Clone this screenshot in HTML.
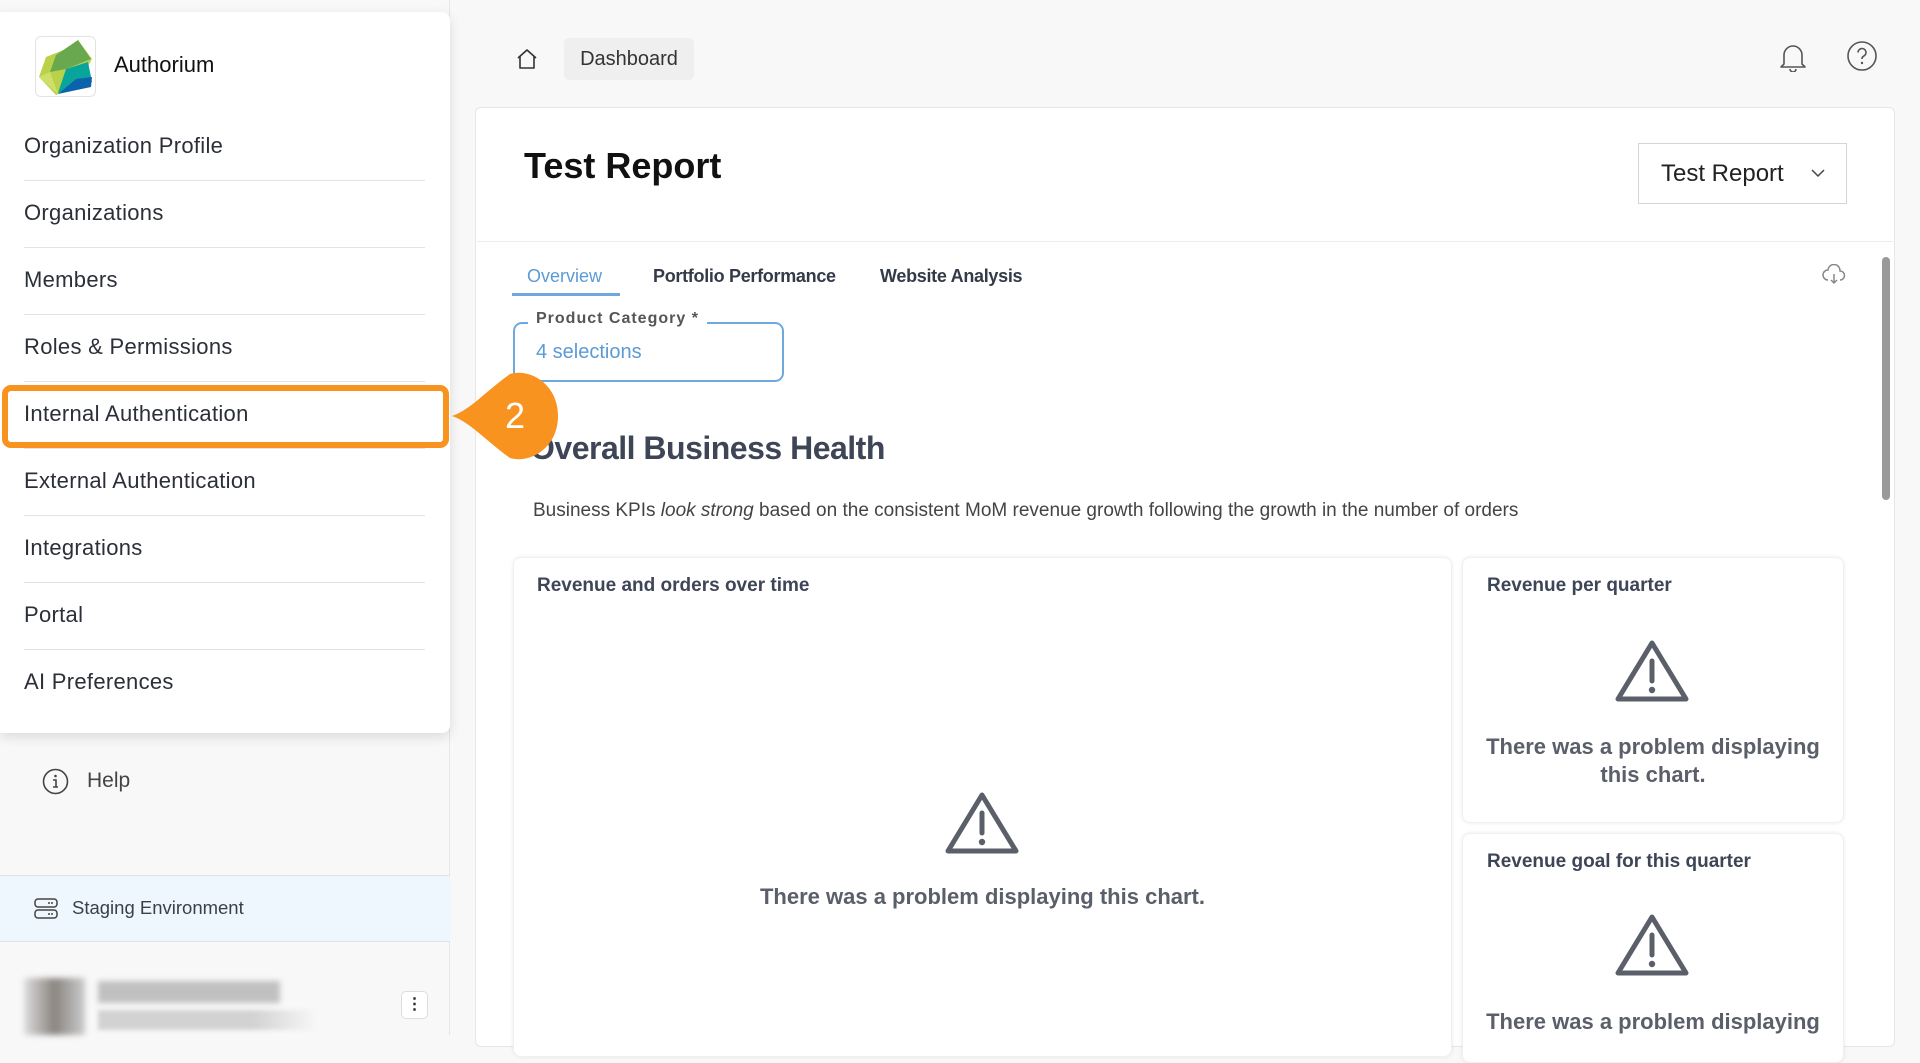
<!DOCTYPE html>
<html><head><meta charset="utf-8"><style>
*{box-sizing:border-box;margin:0;padding:0}
body{width:1920px;height:1035px;overflow:hidden;background:#f8f8f8;font-family:"Liberation Sans",sans-serif;position:relative;color:#222}
.abs{position:absolute}
.side{left:0;top:0;width:450px;height:1035px;background:#f8f8f8;border-right:1px solid #e6e6e6}
.card{left:0;top:12px;width:450px;height:721px;background:#fff;border-radius:0 8px 8px 0;box-shadow:0 4px 12px rgba(0,0,0,.12)}
.nav{position:absolute;left:24px;font-size:22px;letter-spacing:.3px;color:#2b2f38;transform:translateY(-50%)}
.div{position:absolute;left:24px;width:401px;height:1px;background:#e3e3e3}
.main{left:475px;top:107px;width:1420px;height:940px;background:#fff;border:1px solid #e6e6e6;border-radius:6px}
.chart{background:#fff;border-radius:8px;box-shadow:0 0 4px rgba(0,0,0,.08);border:1px solid #f0f0f0}
.ct{position:absolute;font-size:19px;font-weight:bold;color:#3d4557}
.err{position:absolute;font-size:22px;font-weight:bold;color:#5a5f6a;text-align:center}
</style></head><body>
<div class="abs side"></div>
<div class="abs card"></div>
<div class="abs" style="left:35px;top:36px;width:61px;height:61px;border:1px solid #e3e3e3;border-radius:6px;background:#fff;overflow:hidden">
<svg width="61" height="61" viewBox="0 0 61 61"><polygon points="3,40 10,20 30,12 42,3 56,22 40,50 20,58" fill="#b9d24a"/><polygon points="14,35 20,18 42,3 55,22 30,32" fill="#6aa84f"/><polygon points="22,56 30,32 52,25 56,45" fill="#0aa59a"/><polygon points="22,57 40,42 56,40 55,50" fill="#0d62ad"/><polygon points="3,40 14,35 22,57" fill="#cfe06a"/></svg></div>
<div class="abs" style="left:114px;top:52px;font-size:22px;color:#111">Authorium</div>
<div class="nav" style="top:146px">Organization Profile</div><div class="div" style="top:180px"></div>
<div class="nav" style="top:213px">Organizations</div><div class="div" style="top:247px"></div>
<div class="nav" style="top:280px">Members</div><div class="div" style="top:314px"></div>
<div class="nav" style="top:347px">Roles &amp; Permissions</div><div class="div" style="top:381px"></div>
<div class="nav" style="top:414px">Internal Authentication</div><div class="div" style="top:448px"></div>
<div class="nav" style="top:481px">External Authentication</div><div class="div" style="top:515px"></div>
<div class="nav" style="top:548px">Integrations</div><div class="div" style="top:582px"></div>
<div class="nav" style="top:615px">Portal</div><div class="div" style="top:649px"></div>
<div class="nav" style="top:682px">AI Preferences</div>
<div class="abs" style="left:2px;top:385px;width:447px;height:63px;border:6px solid #f7931e;border-radius:9px"></div>
<svg class="abs" style="left:42px;top:768px" width="27" height="27" viewBox="0 0 27 27"><circle cx="13.5" cy="13.5" r="12" fill="none" stroke="#444" stroke-width="1.6"/><circle cx="13.5" cy="8" r="1.3" fill="#444"/><path d="M11 12h3v7M11 19h5" stroke="#444" stroke-width="1.6" fill="none"/></svg>
<div class="abs" style="left:87px;top:769px;font-size:21px;color:#444">Help</div>
<div class="abs" style="left:0;top:875px;width:450px;height:67px;background:#eff7fe;border-top:1px solid #e3e3e3;border-bottom:1px solid #e3e3e3"></div>
<svg class="abs" style="left:34px;top:898px" width="24" height="22" viewBox="0 0 24 22"><rect x="1" y="1" width="22" height="8" rx="3" fill="none" stroke="#444" stroke-width="1.5"/><rect x="1" y="12" width="22" height="8" rx="3" fill="none" stroke="#444" stroke-width="1.5"/><circle cx="15" cy="5" r="1" fill="#444"/><circle cx="18" cy="5" r="1" fill="#444"/><circle cx="15" cy="16" r="1" fill="#444"/><circle cx="18" cy="16" r="1" fill="#444"/></svg>
<div class="abs" style="left:72px;top:897px;font-size:18.5px;color:#3a3f4a">Staging Environment</div>
<div class="abs" style="left:24px;top:978px;width:61px;height:57px;background:linear-gradient(90deg,#ddd,#8a8580,#ccc);filter:blur(3px)"></div>
<div class="abs" style="left:98px;top:981px;width:182px;height:22px;background:#c0c0c0;filter:blur(3px)"></div>
<div class="abs" style="left:98px;top:1010px;width:220px;height:20px;background:linear-gradient(90deg,#d2d2d2 70%,#f8f8f8);filter:blur(2px)"></div>
<div class="abs" style="left:401px;top:991px;width:27px;height:28px;border:1px solid #ddd;border-radius:5px;background:#fff;text-align:center;font-size:16px;line-height:26px;font-weight:bold">⋮</div>
<svg class="abs" style="left:516px;top:48px" width="22" height="22" viewBox="0 0 22 22"><path d="M2 10 L11 2 L20 10 M4 8 V20 H18 V8" fill="none" stroke="#333" stroke-width="1.6" stroke-linejoin="round"/></svg>
<div class="abs" style="left:564px;top:38px;width:130px;height:42px;background:#efefef;border-radius:5px;font-size:20px;color:#333;line-height:42px;text-align:center">Dashboard</div>
<svg class="abs" style="left:1779px;top:42px" width="28" height="30" viewBox="0 0 28 30"><path d="M5 22 V13 a9 9 0 0 1 18 0 V22 L26 25 H2 Z M11 27 a3 3 0 0 0 6 0" fill="none" stroke="#555" stroke-width="1.6" stroke-linejoin="round"/></svg>
<svg class="abs" style="left:1846px;top:40px" width="32" height="32" viewBox="0 0 32 32"><circle cx="16" cy="16" r="14" fill="none" stroke="#555" stroke-width="1.6"/><path d="M12 12.5 a4 4 0 1 1 5.5 3.7 c-1.2.5-1.5 1.3-1.5 2.8" fill="none" stroke="#555" stroke-width="1.6"/><circle cx="16" cy="23" r="1.2" fill="#555"/></svg>
<div class="abs main"></div>
<div class="abs" style="left:524px;top:145px;font-size:36px;font-weight:bold;color:#111">Test Report</div>
<div class="abs" style="left:1638px;top:143px;width:209px;height:61px;border:1px solid #d5d5d5;background:#fff"></div>
<div class="abs" style="left:1661px;top:160px;font-size:24px;color:#222">Test Report</div>
<svg class="abs" style="left:1810px;top:168px" width="16" height="10" viewBox="0 0 16 10"><path d="M2 2 L8 8 L14 2" fill="none" stroke="#444" stroke-width="1.5"/></svg>
<div class="abs" style="left:477px;top:241px;width:1416px;height:1px;background:#ececec"></div>
<div class="abs" style="left:527px;top:266px;font-size:18px;color:#5b9bd5">Overview</div>
<div class="abs" style="left:512px;top:293px;width:108px;height:3px;background:#6fa8dc"></div>
<div class="abs" style="left:653px;top:266px;font-size:18px;font-weight:bold;color:#333a48;letter-spacing:-.3px">Portfolio Performance</div>
<div class="abs" style="left:880px;top:266px;font-size:18px;font-weight:bold;color:#333a48;letter-spacing:-.3px">Website Analysis</div>
<svg class="abs" style="left:1822px;top:264px" width="24" height="22" viewBox="0 0 24 22"><path d="M6 16 a5 5 0 0 1 0-10 a6 6 0 0 1 12 1 a4 4 0 0 1 0 9 M12 10 v9 M9 16 l3 3 l3-3" fill="none" stroke="#888" stroke-width="1.5"/></svg>
<div class="abs" style="left:1882px;top:257px;width:8px;height:243px;background:#999;border-radius:4px"></div>
<div class="abs" style="left:513px;top:322px;width:271px;height:60px;border:2px solid #6fa8dc;border-radius:9px"></div>
<div class="abs" style="left:528px;top:310px;background:#fff;padding:0 8px;font-size:16px;color:#555;letter-spacing:1px;font-weight:bold">Product Category *</div>
<div class="abs" style="left:536px;top:341px;font-size:20px;color:#5b9bd5">4 selections</div>
<div class="abs" style="left:530px;top:430px;font-size:32px;font-weight:bold;color:#3d4557;letter-spacing:-.5px">Overall Business Health</div>
<div class="abs" style="left:533px;top:500px;font-size:19px;color:#444">Business KPIs <i>look strong</i> based on the consistent MoM revenue growth following the growth in the number of orders</div>
<div class="abs chart" style="left:513px;top:557px;width:939px;height:500px"></div>
<div class="ct" style="left:537px;top:575px">Revenue and orders over time</div>
<svg class="abs" style="left:944px;top:791px" width="76" height="64" viewBox="0 0 76 64"><path d="M38 4 L72 60 H4 Z" fill="none" stroke="#5a5f6a" stroke-width="5" stroke-linejoin="round"/><path d="M38 22 V42" stroke="#5a5f6a" stroke-width="5" stroke-linecap="round"/><circle cx="38" cy="51" r="3.2" fill="#5a5f6a"/></svg>
<div class="err" style="left:513px;width:939px;top:884px">There was a problem displaying this chart.</div>
<div class="abs chart" style="left:1462px;top:557px;width:382px;height:266px"></div>
<div class="ct" style="left:1487px;top:575px">Revenue per quarter</div>
<svg class="abs" style="left:1614px;top:639px" width="76" height="64" viewBox="0 0 76 64"><path d="M38 4 L72 60 H4 Z" fill="none" stroke="#5a5f6a" stroke-width="5" stroke-linejoin="round"/><path d="M38 22 V42" stroke="#5a5f6a" stroke-width="5" stroke-linecap="round"/><circle cx="38" cy="51" r="3.2" fill="#5a5f6a"/></svg>
<div class="err" style="left:1462px;width:382px;top:733px;line-height:28px">There was a problem displaying<br>this chart.</div>
<div class="abs chart" style="left:1462px;top:833px;width:382px;height:230px"></div>
<div class="ct" style="left:1487px;top:851px">Revenue goal for this quarter</div>
<svg class="abs" style="left:1614px;top:913px" width="76" height="64" viewBox="0 0 76 64"><path d="M38 4 L72 60 H4 Z" fill="none" stroke="#5a5f6a" stroke-width="5" stroke-linejoin="round"/><path d="M38 22 V42" stroke="#5a5f6a" stroke-width="5" stroke-linecap="round"/><circle cx="38" cy="51" r="3.2" fill="#5a5f6a"/></svg>
<div class="err" style="left:1462px;width:382px;top:1008px;line-height:28px">There was a problem displaying</div>
<svg class="abs" style="left:450px;top:370px;z-index:5" width="110" height="92" viewBox="0 0 110 92"><path d="M2,46 C20,40 35,22 60,4 C80,-2 108,14 108,46 C108,78 80,94 60,88 C35,70 20,52 2,46Z" fill="#f7931e"/><text x="65" y="58" font-family="Liberation Sans" font-size="36" fill="#fff" text-anchor="middle">2</text></svg>
</body></html>
